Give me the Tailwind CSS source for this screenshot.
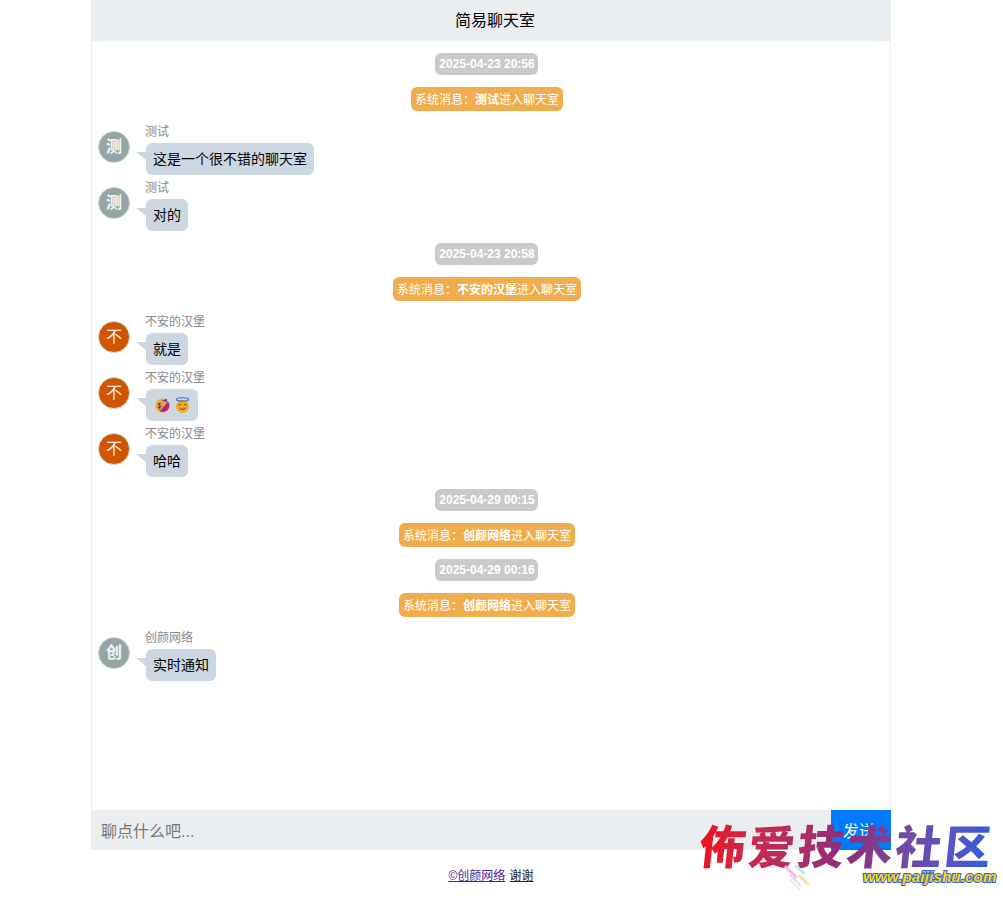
<!DOCTYPE html>
<html lang="zh-CN">

<head>
  <meta charset="UTF-8">
  <meta name="viewport" content="width=device-width, initial-scale=1.0">
  <title>简易聊天室</title>
  <script src="https://cdn.jsdelivr.net/npm/@tailwindcss/browser@4"></script>
</head>

<body class="relative h-[900px] overflow-hidden bg-white font-['Liberation_Sans','Noto_Sans_CJK_SC',sans-serif] text-black">
  <div class="ml-[91px] w-[800px]">
    <!-- header -->
    <div class="flex h-[41px] items-center justify-center bg-[#ebeef1] pl-2 text-base">简易聊天室</div>

    <!-- messages -->
    <div class="h-[769px] border-x border-[#eeeeee] pr-[8px]">
      <div class="flex flex-col items-center">
        <div class="mt-3 mr-px flex h-[22px] items-center rounded-md bg-[#cacaca] pl-1 pr-[3px] text-xs font-bold text-white">2025-04-23 20:56</div>
        <div class="mt-3 flex h-6 items-center rounded-md bg-[#f0ad4e] px-1 pt-px text-xs text-white">系统消息：<b>测试</b>进入聊天室</div>
      </div>

      <div class="mt-[14px] flex pl-[6px]">
        <div class="mt-[6px] flex h-8 w-8 shrink-0 items-center justify-center rounded-full border border-[#c5dcc5] bg-[#95a5a6] text-base font-bold text-white/90">测</div>
        <div class="relative ml-4">
          <div class="-ml-px h-[18px] text-xs leading-[14px] text-[#888888]">测试</div>
          <div class="absolute left-[-10px] top-[27px] h-0 w-0 border-t-[8px] border-l-[10px] border-t-[#cdd7e2] border-l-transparent"></div>
          <div class="w-fit rounded-md bg-[#cdd7e2] px-[7px] py-[6px] text-sm leading-5">这是一个很不错的聊天室</div>
        </div>
      </div>
      <div class="mt-[6px] flex pl-[6px]">
        <div class="mt-[6px] flex h-8 w-8 shrink-0 items-center justify-center rounded-full border border-[#c5dcc5] bg-[#95a5a6] text-base font-bold text-white/90">测</div>
        <div class="relative ml-4">
          <div class="-ml-px h-[18px] text-xs leading-[14px] text-[#888888]">测试</div>
          <div class="absolute left-[-10px] top-[27px] h-0 w-0 border-t-[8px] border-l-[10px] border-t-[#cdd7e2] border-l-transparent"></div>
          <div class="w-fit rounded-md bg-[#cdd7e2] px-[7px] py-[6px] text-sm leading-5">对的</div>
        </div>
      </div>

      <div class="flex flex-col items-center">
        <div class="mt-3 mr-px flex h-[22px] items-center rounded-md bg-[#cacaca] pl-1 pr-[3px] text-xs font-bold text-white">2025-04-23 20:58</div>
        <div class="mt-3 flex h-6 items-center rounded-md bg-[#f0ad4e] px-1 pt-px text-xs text-white">系统消息：<b>不安的汉堡</b>进入聊天室</div>
      </div>

      <div class="mt-[14px] flex pl-[6px]">
        <div class="mt-[6px] flex h-8 w-8 shrink-0 items-center justify-center rounded-full border border-[#c5dcc5] bg-[#d35400] text-base text-white/90">不</div>
        <div class="relative ml-4">
          <div class="-ml-px h-[18px] text-xs leading-[14px] text-[#888888]">不安的汉堡</div>
          <div class="absolute left-[-10px] top-[27px] h-0 w-0 border-t-[8px] border-l-[10px] border-t-[#cdd7e2] border-l-transparent"></div>
          <div class="w-fit rounded-md bg-[#cdd7e2] px-[7px] py-[6px] text-sm leading-5">就是</div>
        </div>
      </div>
      <div class="mt-[6px] flex pl-[6px]">
        <div class="mt-[6px] flex h-8 w-8 shrink-0 items-center justify-center rounded-full border border-[#c5dcc5] bg-[#d35400] text-base text-white/90">不</div>
        <div class="relative ml-4">
          <div class="-ml-px h-[18px] text-xs leading-[14px] text-[#888888]">不安的汉堡</div>
          <div class="absolute left-[-10px] top-[27px] h-0 w-0 border-t-[8px] border-l-[10px] border-t-[#cdd7e2] border-l-transparent"></div>
          <div class="flex h-8 w-[52px] items-center gap-[5px] rounded-md bg-[#cdd7e2] pl-[9px]">
            <!-- rolling on the floor laughing -->
            <svg class="h-[15px] w-[15px]" viewBox="0 0 16 16">
              <circle cx="8" cy="8" r="7.5" fill="#f7a823" />
              <path d="M5 14 L14 4 A7 7 0 0 1 9 15 Z" fill="#b5267e" />
              <path d="M3 7 L6 5 M5 5 L5 12 M3 10 L7 9 M8 3 L13 2 M11 1 L12 5" stroke="#3b4bc8" stroke-width="1.4" fill="none" />
            </svg>
            <!-- smiling face with halo -->
            <svg class="h-[16px] w-[15px]" viewBox="0 0 16 17">
              <circle cx="8" cy="10" r="6.8" fill="#f7a823" />
              <ellipse cx="8" cy="2.6" rx="6.5" ry="1.8" fill="none" stroke="#3f6fd8" stroke-width="1.2" />
              <path d="M3.8 8.5 Q5 7 6.2 8.5 M9.8 8.5 Q11 7 12.2 8.5 M5 11.5 Q8 15 11 11.5" stroke="#5a3a10" stroke-width="1" fill="none" />
            </svg>
          </div>
        </div>
      </div>
      <div class="mt-[6px] flex pl-[6px]">
        <div class="mt-[6px] flex h-8 w-8 shrink-0 items-center justify-center rounded-full border border-[#c5dcc5] bg-[#d35400] text-base text-white/90">不</div>
        <div class="relative ml-4">
          <div class="-ml-px h-[18px] text-xs leading-[14px] text-[#888888]">不安的汉堡</div>
          <div class="absolute left-[-10px] top-[27px] h-0 w-0 border-t-[8px] border-l-[10px] border-t-[#cdd7e2] border-l-transparent"></div>
          <div class="w-fit rounded-md bg-[#cdd7e2] px-[7px] py-[6px] text-sm leading-5">哈哈</div>
        </div>
      </div>

      <div class="flex flex-col items-center">
        <div class="mt-3 mr-px flex h-[22px] items-center rounded-md bg-[#cacaca] pl-1 pr-[3px] text-xs font-bold text-white">2025-04-29 00:15</div>
        <div class="mt-3 flex h-6 items-center rounded-md bg-[#f0ad4e] px-1 pt-px text-xs text-white">系统消息：<b>创颜网络</b>进入聊天室</div>
        <div class="mt-3 mr-px flex h-[22px] items-center rounded-md bg-[#cacaca] pl-1 pr-[3px] text-xs font-bold text-white">2025-04-29 00:16</div>
        <div class="mt-3 flex h-6 items-center rounded-md bg-[#f0ad4e] px-1 pt-px text-xs text-white">系统消息：<b>创颜网络</b>进入聊天室</div>
      </div>

      <div class="mt-[14px] flex pl-[6px]">
        <div class="mt-[6px] flex h-8 w-8 shrink-0 items-center justify-center rounded-full border border-[#c5dcc5] bg-[#95a5a6] text-base font-bold text-white/90">创</div>
        <div class="relative ml-4">
          <div class="-ml-px h-[18px] text-xs leading-[14px] text-[#888888]">创颜网络</div>
          <div class="absolute left-[-10px] top-[27px] h-0 w-0 border-t-[8px] border-l-[10px] border-t-[#cdd7e2] border-l-transparent"></div>
          <div class="w-fit rounded-md bg-[#cdd7e2] px-[7px] py-[6px] text-sm leading-5">实时通知</div>
        </div>
      </div>
    </div>

    <!-- input -->
    <div class="flex h-10 bg-[#ebeef1]">
      <input class="min-w-0 flex-1 bg-transparent pl-[10px] pt-[3px] text-base outline-none placeholder:text-[#777777]" placeholder="聊点什么吧...">
      <button class="w-[60px] bg-[#007bff] pt-[3px] pr-1 text-base text-white">发送</button>
    </div>

    <!-- footer -->
    <div class="mt-[18px] text-center text-xs leading-4">
      <a href="#" class="text-[#551a8b] underline">©创颜网络</a>
      <a href="#" class="ml-px text-[#222222] underline">谢谢</a>
    </div>
  </div>

  <!-- watermark -->
  <div class="absolute left-[700px] top-[813px] w-[298px]">
    <div class="w-[290px] skew-x-[-6deg] bg-gradient-to-r from-[#f00a12] via-[#8f2c78] to-[#2f5be0] bg-clip-text font-['Noto_Sans_CJK_SC',sans-serif] text-[46px] leading-[62px] font-black tracking-[3px] whitespace-nowrap text-transparent">佈爱技术社区</div>
    <svg class="absolute left-[84px] top-[51px] h-[28px] w-[30px]" viewBox="0 0 30 28">
      <path d="M2 3 L12 13" stroke="#f7b6ee" stroke-width="3" stroke-linecap="round" />
      <path d="M12 2 L20 9" stroke="#b5f2ee" stroke-width="3" stroke-linecap="round" />
      <path d="M6 11 L16 21" stroke="#c6d6f6" stroke-width="1.5" stroke-linecap="round" />
      <path d="M16 12 L24 20" stroke="#f8dfa8" stroke-width="3" stroke-linecap="round" />
      <path d="M6 16 L16 26" stroke="#f8ebc8" stroke-width="2" stroke-linecap="round" />
    </svg>
    <div class="absolute left-[163px] top-[56px] font-['Liberation_Sans',sans-serif] text-[15px] leading-4 font-bold tracking-[0.2px] whitespace-nowrap text-[#ffd800] italic [-webkit-text-stroke:2px_#2a62e0] [paint-order:stroke_fill]">www.paijishu.com</div>
  </div>
</body>

</html>
